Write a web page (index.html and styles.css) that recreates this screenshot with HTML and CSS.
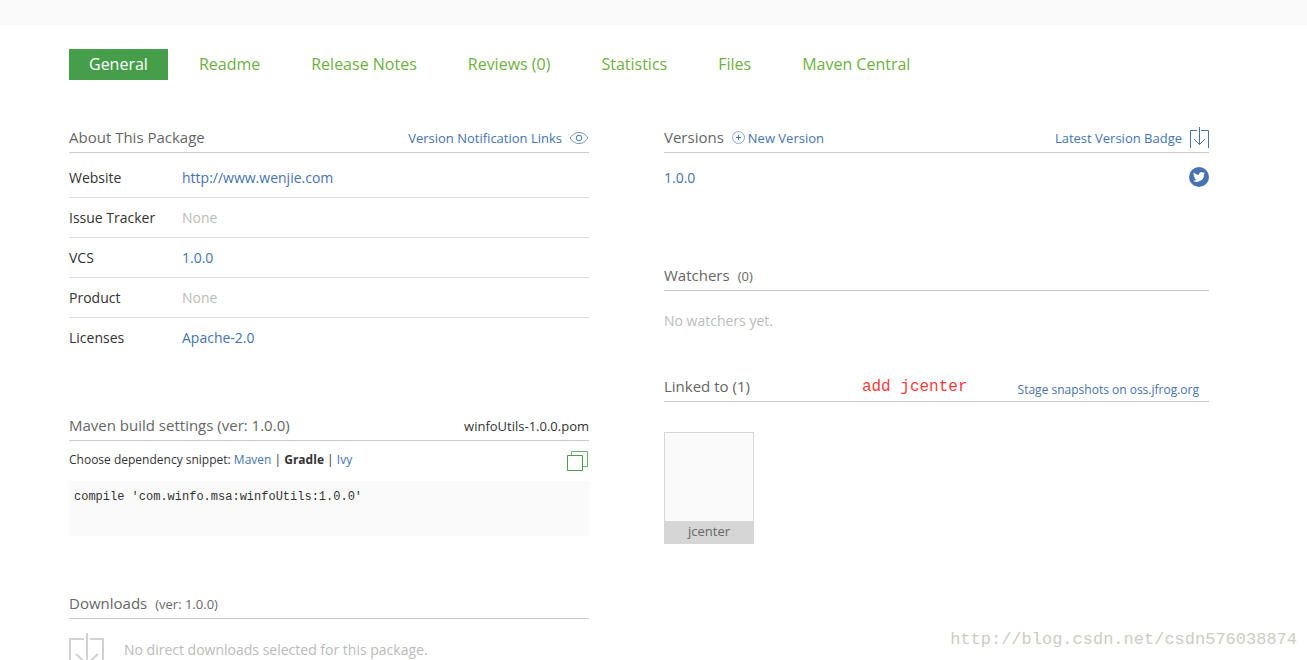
FILE: index.html
```html
<!DOCTYPE html>
<html lang="en">
<head>
<meta charset="utf-8">
<title>Package</title>
<link rel="stylesheet" href="styles.css">
</head>
<body>
<div class="topbar"></div>
<div class="page">
  <nav class="tabs">
    <a class="tab active" href="#">General</a>
    <a class="tab" href="#">Readme</a>
    <a class="tab" href="#">Release Notes</a>
    <a class="tab" href="#">Reviews (0)</a>
    <a class="tab" href="#">Statistics</a>
    <a class="tab" href="#">Files</a>
    <a class="tab" href="#">Maven Central</a>
  </nav>
  <main class="columns">
    <div>
      <section class="about">
        <header class="head">
          <h2>About This Package</h2>
          <a class="action push" href="#">Version Notification Links
            <svg class="eye" width="20" height="14" viewBox="0 0 20 14" fill="none" stroke="#4673ad" stroke-width="1"><path stroke-opacity=".8" d="M1 7C4 2.8 7 1.5 10 1.5S16 2.8 19 7C16 11.2 13 12.500 10 12.500S4 11.200 1 7Z"/><circle cx="10" cy="7" r="2.800"/></svg>
          </a>
        </header>
        <dl class="facts">
          <div class="fact"><dt>Website</dt><dd><a href="#">http://www.wenjie.com</a></dd></div>
          <div class="fact"><dt>Issue Tracker</dt><dd>None</dd></div>
          <div class="fact"><dt>VCS</dt><dd><a href="#">1.0.0</a></dd></div>
          <div class="fact"><dt>Product</dt><dd>None</dd></div>
          <div class="fact"><dt>Licenses</dt><dd><a href="#">Apache-2.0</a></dd></div>
        </dl>
      </section>
      <section class="build">
        <header class="head">
          <h2>Maven build settings (ver: 1.0.0)</h2>
          <span class="pom push">winfoUtils-1.0.0.pom</span>
        </header>
        <div class="snippet">
          <span class="choices">Choose dependency snippet: <a href="#">Maven</a> | <b>Gradle</b> | <a href="#">Ivy</a></span>
          <button class="copy push" type="button" aria-label="Copy">
            <svg width="22" height="22" viewBox="0 0 22 22" fill="none" stroke="#469e4a"><path d="M.500 5.500H15.500V20.500H.500Z"/><path d="M4.500 5V1.500H20.500V16.500H16" stroke-opacity=".8"/></svg>
          </button>
        </div>
        <pre class="code">compile 'com.winfo.msa:winfoUtils:1.0.0'</pre>
      </section>
      <section>
        <header class="head">
          <h2>Downloads</h2>
          <small>(ver: 1.0.0)</small>
        </header>
        <div class="downloads">
          <svg width="36" height="36" viewBox="0 0 36 36" fill="none" stroke="#d2d2d2" stroke-width="2"><path d="M15 6H1V35H34V6H21M18 0V31M7 21L18 31L29 21"/></svg>
          <span>No direct downloads selected for this package.</span>
        </div>
      </section>
    </div>
    <div>
      <section class="versions">
        <header class="head">
          <h2>Versions</h2>
          <a class="action new" href="#">
            <svg width="13" height="13" viewBox="0 0 13 13" fill="none" stroke="#4673ad"><circle cx="6.500" cy="6.500" r="6" stroke-opacity=".6"/><path d="M4 6.500H9M6.500 4V9"/></svg>
            New Version</a>
          <a class="action badge push" href="#">Latest Version Badge
            <svg width="20" height="22" viewBox="0 0 20 22" fill="none" stroke="#4673ad"><path d="M8 3.500H1.500V21M12 3.500H19.500V21M10.500 0V17.500M5 12L10.500 17.500L16 12"/></svg>
          </a>
        </header>
        <div class="version">
          <a class="number" href="#">1.0.0</a>
          <a class="push" href="#" aria-label="Twitter">
            <svg width="20" height="20" viewBox="0 0 20 20"><circle cx="10" cy="10" r="10" fill="#4673ad"/><path fill="#fff" d="M16 6.200l-1.400.4c.5-.3.9-.8 1-1.400l-1.500.6a2.500 2.500 0 0 0-4.200 2.300A7 7 0 0 1 4.800 5.500a2.500 2.500 0 0 0 .8 3.300l-1.100-.3a2.500 2.500 0 0 0 2 2.400l-1.100.1a2.500 2.500 0 0 0 2.300 1.700A5 5 0 0 1 4 13.700a7.100 7.100 0 0 0 10.900-6.300z"/></svg>
          </a>
        </div>
      </section>
      <section class="watchers">
        <header class="head">
          <h2>Watchers</h2>
          <small>(0)</small>
        </header>
        <p class="empty">No watchers yet.</p>
      </section>
      <section>
        <header class="head">
          <h2>Linked to (1)</h2>
          <span class="note">add jcenter</span>
          <a class="stage push" href="#">Stage snapshots on oss.jfrog.org</a>
        </header>
        <a class="repo" href="#"><span class="thumb"></span><span class="name">jcenter</span></a>
      </section>
    </div>
  </main>
</div>
<div class="watermark">http://blog.csdn.net/csdn576038874</div>
</body>
</html>
```
FILE: styles.css
```css
* { box-sizing: border-box; }
body {
  position: relative;
  height: 100vh;
  margin: 0;
  overflow: hidden;
  background: #fff;
  color: #333;
  font: 14px/20px "Open Sans", sans-serif;
}
a { color: #4673ad; text-decoration: none; }
svg { display: block; flex: none; }
h2, p, dl, dd, pre { margin: 0; }
.topbar { height: 25px; background: #fafafa; }
.page { padding: 24px 98px 0 69px; }
.push { margin-left: auto; }

.tabs { display: flex; gap: 11px; }
.tab {
  padding: 0 20px;
  color: #6fb043;
  font-size: 16px;
  line-height: 31px;
  white-space: nowrap;
}
.tab.active { background: #469e4a; color: #fff; }

.columns {
  display: grid;
  grid-template-columns: 520fr 545fr;
  gap: 75px;
  margin-top: 43px;
}
.head {
  display: flex;
  align-items: center;
  height: 30px;
  border-bottom: 1px solid #ccc;
  white-space: nowrap;
}
.head h2 { padding-bottom: 2px; color: #666; font-size: 15px; font-weight: 400; }
.head small { margin-left: 8px; color: #666; font-size: 13px; }
.action { display: flex; align-items: center; gap: 7px; font-size: 13px; }
.new { gap: 3px; margin-left: 8px; }
.pom { font-size: 13px; }

.about { height: 288px; }
.facts { padding-top: 5px; }
.fact { display: flex; height: 40px; border-bottom: 1px solid #ddd; line-height: 40px; }
.fact:last-child { border-bottom: 0; }
.fact dt { width: 113px; }
.fact dd { color: #bbb; }

.build { height: 178px; }
.snippet { display: flex; align-items: center; height: 40px; font-size: 12px; }
.choices { padding-bottom: 2px; }
.copy { padding: 0; border: 0; background: none; }
.code {
  height: 55px;
  padding: 6px 5px;
  background: #fafafa;
  font: 12px/20px "Liberation Mono", monospace;
}
.downloads { display: flex; gap: 19px; padding-top: 14px; color: #bbb; line-height: 34px; }

.versions { height: 138px; }
.version { display: flex; align-items: center; padding-top: 13px; }
.number { padding-top: 2px; }
.watchers { height: 111px; }
.empty { padding-top: 20px; color: #bbb; }
.note {
  margin-left: 112px;
  color: #ff3b3b;
  font: 16px/20px "Liberation Mono", monospace;
}
.stage { padding: 6px 10px 0 0; font-size: 12px; }
.repo {
  display: block;
  width: 90px;
  margin-top: 30px;
  border: 1px solid #d6d6d6;
  color: #666;
  font-size: 13px;
  text-align: center;
}
.thumb { display: block; height: 88px; background: #fafafa; }
.name { display: block; padding-bottom: 2px; background: #d6d6d6; line-height: 20px; }
.watermark {
  position: absolute;
  right: 10px;
  bottom: 10px;
  color: #ccccc4;
  font: 17px/20px "Liberation Mono", monospace;
}
```
